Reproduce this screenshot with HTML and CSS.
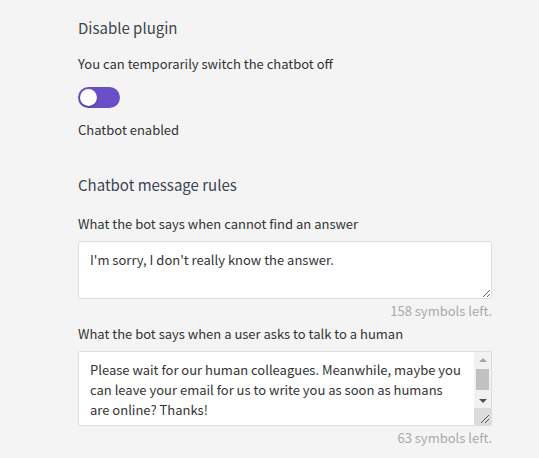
FILE: index.html
```html
<!DOCTYPE html>
<html>
<head>
<meta charset="utf-8">
<link rel="stylesheet" href="styles.css">
</head>
<body>

<!--Disable plugin-->
<div class="section">
  <h3 class="sectionTitle">Disable plugin</h3>
  <p class="hint">You can temporarily switch the chatbot off</p>
  <label class="toggle">
    <input type="checkbox" checked>
    <span class="slider"></span>
  </label>
  <p class="state">Chatbot enabled</p>
</div>

<!--Message rules-->
<div class="section">
  <h3 class="sectionTitle">Chatbot message rules</h3>

  <label class="fieldLabel" for="noAnswer">What the bot says when cannot find an answer</label>
  <textarea id="noAnswer" class="msgBox short">I'm sorry, I don't really know the answer.</textarea>
  <div class="counter">158 symbols left.</div>

  <label class="fieldLabel" for="humanAsk">What the bot says when a user asks to talk to a human</label>
  <div class="boxWrap">
    <textarea id="humanAsk" class="msgBox tall">Please wait for our human colleagues. Meanwhile, maybe you can leave your email for us to write you as soon as humans are online? Thanks!</textarea>
    <!-- scrollbar look-alike -->
    <div class="fakeScroll">
      <div class="arrow up"></div>
      <div class="track"><div class="thumb"></div></div>
      <div class="arrow down"></div>
      <div class="corner">
        <svg width="15" height="15" viewBox="0 0 15 15">
          <line x1="5" y1="13" x2="13" y2="5" stroke="#555" stroke-width="1"/>
          <line x1="9" y1="13" x2="13" y2="9" stroke="#555" stroke-width="1"/>
        </svg>
      </div>
    </div>
  </div>
  <div class="counter">63 symbols left.</div>
</div>

</body>
</html>
```
FILE: styles.css
```css
body {
  margin: 0;
  background-color: #f4f4f4;
  font-family: "Noto Sans CJK KR", sans-serif;
  font-size: 13px;
  color: #333;
}

.section {
  width: 414px;
  margin-left: 78px;
  padding-top: 14px;
}

.section + .section {
  padding-top: 31px;
}

.sectionTitle {
  margin: 0 0 12px 0;
  font-size: 15px;
  font-weight: normal;
  color: #3a4550;
  line-height: 28px;
}

.section + .section .sectionTitle {
  margin-bottom: 15px;
}

.hint,
.state {
  margin: 0;
  line-height: 20px;
}

/* The toggle */
.toggle {
  display: block;
  position: relative;
  width: 42px;
  height: 21px;
  margin: 13px 0 12px 0;
}

.toggle input {
  opacity: 0;
  width: 0;
  height: 0;
  margin: 0;
}

.slider {
  position: absolute;
  inset: 0;
  border-radius: 11px;
  background-color: #ccc;
}

.toggle input:checked + .slider {
  background-color: #6a4ec6;
}

.slider:before {
  content: "";
  position: absolute;
  left: 2px;
  top: 2px;
  width: 17px;
  height: 17px;
  border-radius: 50%;
  background-color: white;
  box-shadow: 0 1px 2px rgba(0,0,0,0.3);
}

.fieldLabel {
  display: block;
  line-height: 20px;
  margin-top: 1px;
  margin-bottom: 7px;
}

.msgBox {
  display: block;
  box-sizing: border-box;
  width: 414px;
  margin: 0;
  padding: 8px 11px;
  border: 1px solid #ddd;
  border-radius: 2px;
  background-color: white;
  font-family: inherit;
  font-size: 13px;
  line-height: 20px;
  color: #333;
  resize: vertical;
}

.msgBox.short {
  height: 58px;
}

.boxWrap {
  position: relative;
}

.msgBox.tall {
  height: 75px;
  padding-right: 28px;
  overflow: hidden;
  resize: none;
}

.fakeScroll {
  position: absolute;
  top: 1px;
  right: 1px;
  bottom: 1px;
  width: 17px;
  display: flex;
  flex-direction: column;
  background-color: #f1f1f1;
}

.arrow {
  height: 15px;
  display: flex;
  align-items: center;
  justify-content: center;
}

.arrow:before {
  content: "";
  border-left: 4px solid transparent;
  border-right: 4px solid transparent;
}

.arrow.up:before {
  border-bottom: 4px solid #a3a3a3;
}

.arrow.down:before {
  border-top: 4px solid #505050;
}

.track {
  flex: 1;
  padding: 2px 2px 0 2px;
}

.thumb {
  height: 21px;
  background-color: #c1c1c1;
}

.corner {
  height: 17px;
  background-color: #dcdcdc;
  display: flex;
  align-items: flex-end;
  justify-content: flex-end;
}

.counter {
  text-align: right;
  color: #aaa;
  line-height: 24px;
  margin-bottom: 1px;
}
```
